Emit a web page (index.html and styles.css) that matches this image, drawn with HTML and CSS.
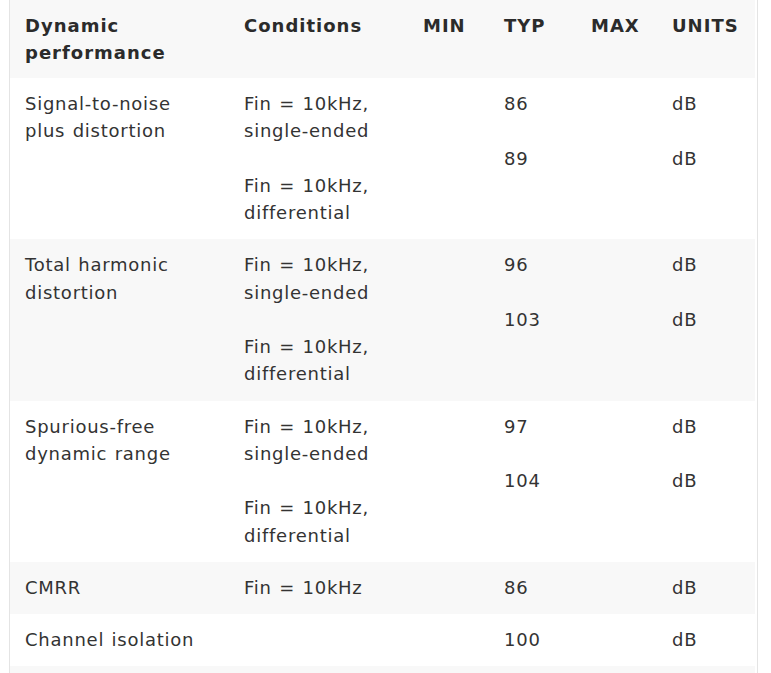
FILE: index.html
```html
<!DOCTYPE html>
<html>
<head>
<meta charset="utf-8">
<link rel="stylesheet" href="styles.css">
</head>
<body>
<div class="wrap">
<table class="spec">
  <colgroup>
    <col class="c1"><col class="c2"><col class="c3"><col class="c4"><col class="c5"><col class="c6">
  </colgroup>
  <thead>
    <tr class="shade">
      <th>Dynamic performance</th>
      <th>Conditions</th>
      <th>MIN</th>
      <th>TYP</th>
      <th>MAX</th>
      <th>UNITS</th>
    </tr>
  </thead>
  <tbody>
    <tr>
      <td>Signal-to-noise plus distortion</td>
      <td>Fin = 10kHz,<br>single-ended<br><br>Fin = 10kHz,<br>differential</td>
      <td></td>
      <td>86<br><br>89</td>
      <td></td>
      <td>dB<br><br>dB</td>
    </tr>
    <tr class="shade">
      <td>Total harmonic distortion</td>
      <td>Fin = 10kHz,<br>single-ended<br><br>Fin = 10kHz,<br>differential</td>
      <td></td>
      <td>96<br><br>103</td>
      <td></td>
      <td>dB<br><br>dB</td>
    </tr>
    <tr>
      <td>Spurious-free dynamic range</td>
      <td>Fin = 10kHz,<br>single-ended<br><br>Fin = 10kHz,<br>differential</td>
      <td></td>
      <td>97<br><br>104</td>
      <td></td>
      <td>dB<br><br>dB</td>
    </tr>
    <tr class="shade">
      <td>CMRR</td>
      <td>Fin = 10kHz</td>
      <td></td>
      <td>86</td>
      <td></td>
      <td>dB</td>
    </tr>
    <tr>
      <td>Channel isolation</td>
      <td></td>
      <td></td>
      <td>100</td>
      <td></td>
      <td>dB</td>
    </tr>
    <tr class="shade">
      <td>&nbsp;</td>
      <td></td>
      <td></td>
      <td></td>
      <td></td>
      <td></td>
    </tr>
  </tbody>
</table>
</div>
</body>
</html>
```

FILE: styles.css
```css
html, body {
  margin: 0;
  padding: 0;
  background: #ffffff;
}

.wrap {
  margin-left: 9px;
  width: 749px;
  box-sizing: border-box;
  border-left: 1px solid #e4e4e4;
  border-right: 1px solid #e4e4e4;
  padding-right: 2px;
  height: 673px;
  overflow: hidden;
}

.spec {
  width: 745px;
  table-layout: fixed;
  border-collapse: collapse;
  font-family: "DejaVu Sans", Verdana, sans-serif;
  font-size: 18px;
  line-height: 27.25px;
  letter-spacing: 0.75px;
  word-spacing: 1px;
  color: #333333;
}

.c1 { width: 219px; }
.c2 { width: 179px; }
.c3 { width: 81px; }
.c4 { width: 87px; }
.c5 { width: 81px; }
.c6 { width: 98px; }

.spec th,
.spec td {
  text-align: left;
  vertical-align: top;
  padding: 12px 15px 13px 15px;
}

.spec th {
  font-weight: bold;
  color: #2b2b2b;
  line-height: 27px;
  letter-spacing: 1px;
  padding-bottom: 12px;
}

.shade {
  background: #f8f8f8;
}
```
